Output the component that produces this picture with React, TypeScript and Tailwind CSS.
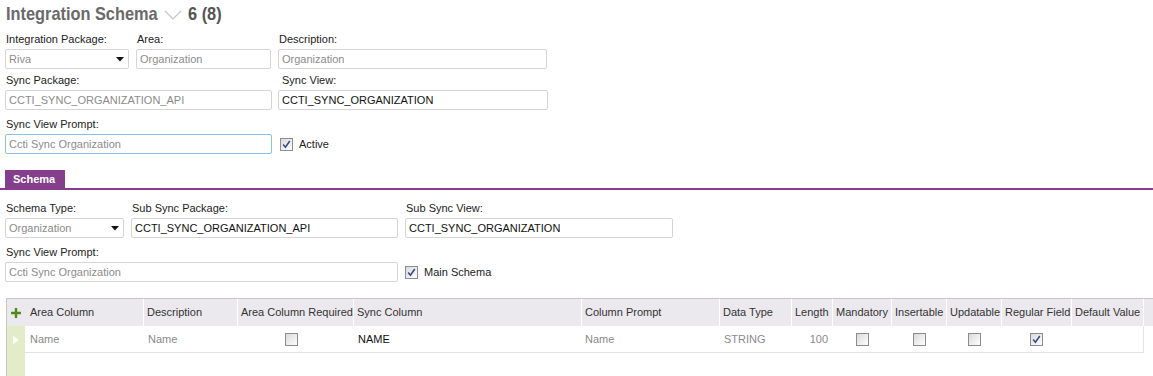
import React from 'react';

const font = { fontFamily: '"Liberation Sans", Arial, sans-serif' };

const Check: React.FC<{ checked?: boolean }> = ({ checked }) => (
    <span className="inline-flex h-[13px] w-[13px] shrink-0 items-center justify-center border border-[#8c8c8c] bg-gradient-to-br from-[#d9d9d9] via-[#ececec] to-[#fdfdfd]">
        {checked && (
            <svg width="11" height="11" viewBox="0 0 11 11">
                <path d="M2.2 5.6 L4.4 8.2 L8.8 2" fill="none" stroke="#34468c" strokeWidth="1.5" />
            </svg>
        )}
    </span>
);

const Input: React.FC<{
    value: string;
    w: string;
    dim?: boolean;
    focus?: boolean;
    select?: boolean;
}> = ({ value, w, dim, focus, select }) => (
    <div
        className={`${w} flex h-[20px] items-center justify-between rounded-[2px] border bg-white pl-[3px] pr-[4px] text-[11px] ${
            focus ? 'border-[#8dbde9]' : 'border-[#d5d5d5]'
        } ${dim ? 'text-[#8b8b8b]' : 'text-[#111]'}`}
    >
        <span className="truncate">{value}</span>
        {select && (
            <svg width="8" height="5" viewBox="0 0 8 5">
                <path d="M0 0 H8 L4 4.5 Z" fill="#111" />
            </svg>
        )}
    </div>
);

const Field: React.FC<{ label: string; indent?: boolean; children: React.ReactNode }> = ({
    label,
    indent,
    children,
}) => (
    <div className="flex flex-col">
        <div className={`mb-[3px] h-[14px] text-[11px] leading-[14px] text-[#222] ${indent ? 'pl-[4px]' : 'pl-[1px]'}`}>
            {label}
        </div>
        {children}
    </div>
);

const CheckLabel: React.FC<{ label: string }> = ({ label }) => (
    <div className="flex h-[20px] items-center gap-[6px] text-[11px] text-[#222]">
        <Check checked />
        <span>{label}</span>
    </div>
);

// no narrow face installed, so the condensed title is squeezed horizontally
const Narrow: React.FC<{ w: string; color: string; children: React.ReactNode }> = ({ w, color, children }) => (
    <span className={`${w} inline-block whitespace-nowrap`}>
        <span className={`inline-block origin-left scale-x-[0.86] text-[19px] font-bold ${color}`}>{children}</span>
    </span>
);

const cols = [
    'Area Column',
    'Description',
    'Area Column Required',
    'Sync Column',
    'Column Prompt',
    'Data Type',
    'Length',
    'Mandatory',
    'Insertable',
    'Updatable',
    'Regular Field',
    'Default Value',
];

const grid = 'grid grid-cols-[18px_119px_94px_116px_228px_138px_72px_41px_59px_55px_55px_70px_72px_9px]';
const cell = 'flex items-center border-b border-[#e3e3e3]';

const App: React.FC = () => {
    return (
        <div className="flex h-[376px] w-[1153px] flex-col overflow-hidden bg-white" style={font}>
            <div className="flex h-[28px] items-center pl-[6px]">
                <Narrow w="w-[154px]" color="text-[#6a6a6a]">
                    Integration Schema
                </Narrow>
                <svg width="18" height="10" viewBox="0 0 18 10" className="ml-[4px] mr-[6px] mt-[2px]">
                    <path d="M1 1 L9 9 L17 1" fill="none" stroke="#c4c4c4" strokeWidth="1.2" />
                </svg>
                <Narrow w="w-[36px]" color="text-[#555]">
                    6 (8)
                </Narrow>
            </div>

            <div className="flex flex-col pl-[5px] pt-[4px]">
                <div className="flex gap-[7px]">
                    <Field label="Integration Package:">
                        <Input value="Riva" w="w-[124px]" dim select />
                    </Field>
                    <Field label="Area:">
                        <Input value="Organization" w="w-[135px]" dim />
                    </Field>
                    <Field label="Description:">
                        <Input value="Organization" w="w-[269px]" dim />
                    </Field>
                </div>
                <div className="mt-[4px] flex gap-[6px]">
                    <Field label="Sync Package:">
                        <Input value="CCTI_SYNC_ORGANIZATION_API" w="w-[267px]" dim />
                    </Field>
                    <Field label="Sync View:" indent>
                        <Input value="CCTI_SYNC_ORGANIZATION" w="w-[270px]" />
                    </Field>
                </div>
                <div className="mt-[7px] flex items-end gap-[8px]">
                    <Field label="Sync View Prompt:">
                        <Input value="Ccti Sync Organization" w="w-[267px]" dim focus />
                    </Field>
                    <CheckLabel label="Active" />
                </div>
            </div>

            <div className="mt-[16px] flex flex-col">
                <div className="ml-[5px] flex h-[18px] w-[60px] items-center bg-[#843e8b] pl-[8px] pt-[1px] text-[11px] font-bold text-white">
                    Schema
                </div>
                <div className="h-[2px] bg-[#843e8b]" />
            </div>

            <div className="flex flex-col pl-[5px] pt-[11px]">
                <div className="flex gap-[7px]">
                    <Field label="Schema Type:">
                        <Input value="Organization" w="w-[119px]" dim select />
                    </Field>
                    <Field label="Sub Sync Package:">
                        <Input value="CCTI_SYNC_ORGANIZATION_API" w="w-[267px]" />
                    </Field>
                    <Field label="Sub Sync View:">
                        <Input value="CCTI_SYNC_ORGANIZATION" w="w-[268px]" />
                    </Field>
                </div>
                <div className="mt-[7px] flex items-end gap-[7px]">
                    <Field label="Sync View Prompt:">
                        <Input value="Ccti Sync Organization" w="w-[393px]" dim />
                    </Field>
                    <CheckLabel label="Main Schema" />
                </div>
            </div>

            <div className="ml-[6px] mt-[16px] flex flex-1 flex-col border-l border-t border-[#c6c6c6] text-[11px]">
                <div className={`${grid} h-[27px] bg-[#ebe9ed] text-[#333]`}>
                    <div className="flex items-center justify-center pt-[1px]">
                        <svg width="10" height="10" viewBox="0 0 10 10">
                            <path d="M5 0 V10 M0 5 H10" stroke="#4f8a16" strokeWidth="2.4" />
                        </svg>
                    </div>
                    {cols.map((c, i) => (
                        <div
                            key={c}
                            className={`flex items-center whitespace-nowrap border-r border-white ${i === 0 ? 'pl-[5px]' : 'pl-[3px]'}`}
                        >
                            {c}
                        </div>
                    ))}
                    <div />
                </div>

                <div className={`${grid} h-[27px]`}>
                    <div className="flex items-center justify-center bg-[#e3ebc9]">
                        <svg width="6" height="8" viewBox="0 0 6 8">
                            <path d="M0 0 L6 4 L0 8 Z" fill="#fff" />
                        </svg>
                    </div>
                    <div className={`${cell} pl-[5px] text-[#8a8a8a]`}>Name</div>
                    <div className={`${cell} pl-[4px] text-[#8a8a8a]`}>Name</div>
                    <div className={`${cell} justify-center pr-[10px]`}>
                        <Check />
                    </div>
                    <div className={`${cell} pl-[4px] text-[#111]`}>NAME</div>
                    <div className={`${cell} pl-[3px] text-[#8a8a8a]`}>Name</div>
                    <div className={`${cell} pl-[4px] text-[#8a8a8a]`}>STRING</div>
                    <div className={`${cell} justify-end pr-[5px] text-[#8a8a8a]`}>100</div>
                    <div className={`${cell} justify-center pr-[1px]`}>
                        <Check />
                    </div>
                    <div className={`${cell} justify-center`}>
                        <Check />
                    </div>
                    <div className={`${cell} justify-center`}>
                        <Check />
                    </div>
                    <div className={`${cell} justify-center pr-[1px]`}>
                        <Check checked />
                    </div>
                    <div className="border-b border-r border-[#e3e3e3]" />
                    <div />
                </div>

                <div className={`${grid} flex-1`}>
                    <div className="bg-[#e3ebc9]" />
                </div>
            </div>
        </div>
    );
};

export default App;
